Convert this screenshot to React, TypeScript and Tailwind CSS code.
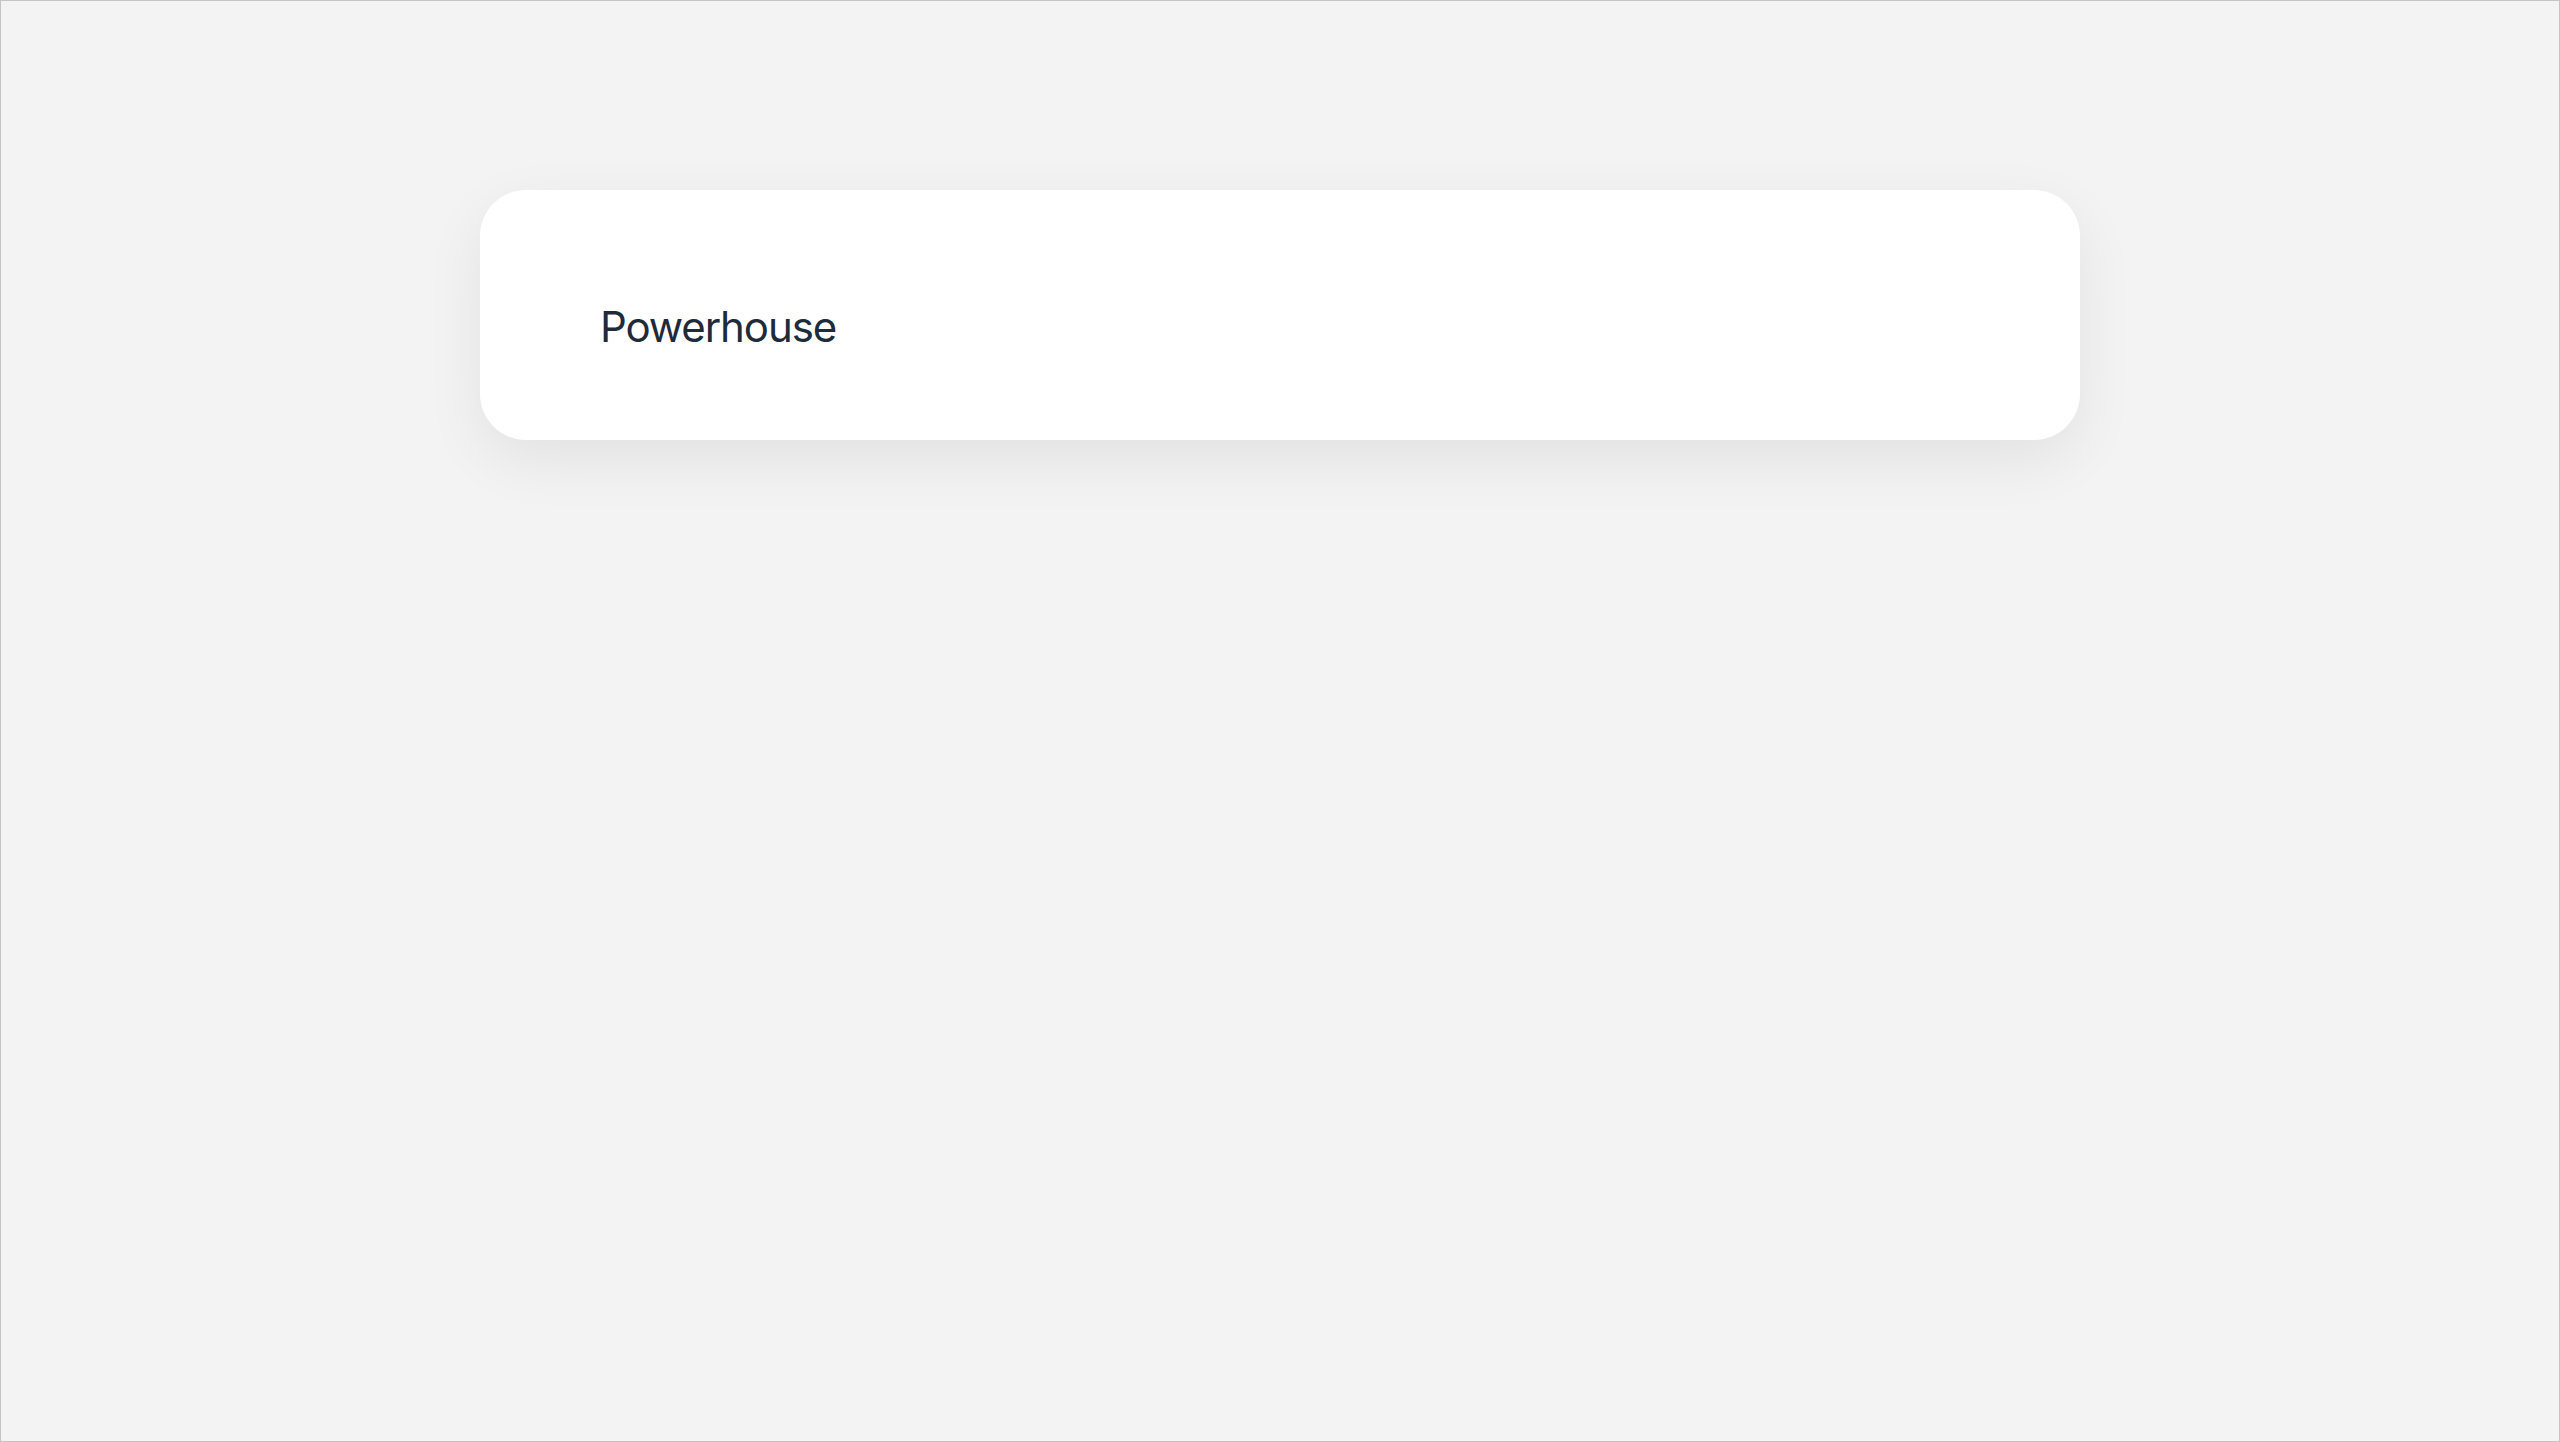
export default function App() {
  return (
    <div className="min-h-screen h-screen w-full bg-[#f3f3f3] border border-[#c4c4c4] font-['Inter','Noto_Sans',sans-serif]">
      <div className="flex justify-center pt-[189px]">
        {/* Title card */}
        <div className="w-[1600px] h-[250px] bg-white rounded-[46px] shadow-[0_20px_60px_rgba(0,0,0,0.07)] flex items-center pl-[120px] pt-[24px]">
          <h1 className="text-[42px] leading-none font-normal text-[#1f2b3a] tracking-[-1.1px]">Powerhouse</h1>
        </div>
      </div>
    </div>
  );
}
